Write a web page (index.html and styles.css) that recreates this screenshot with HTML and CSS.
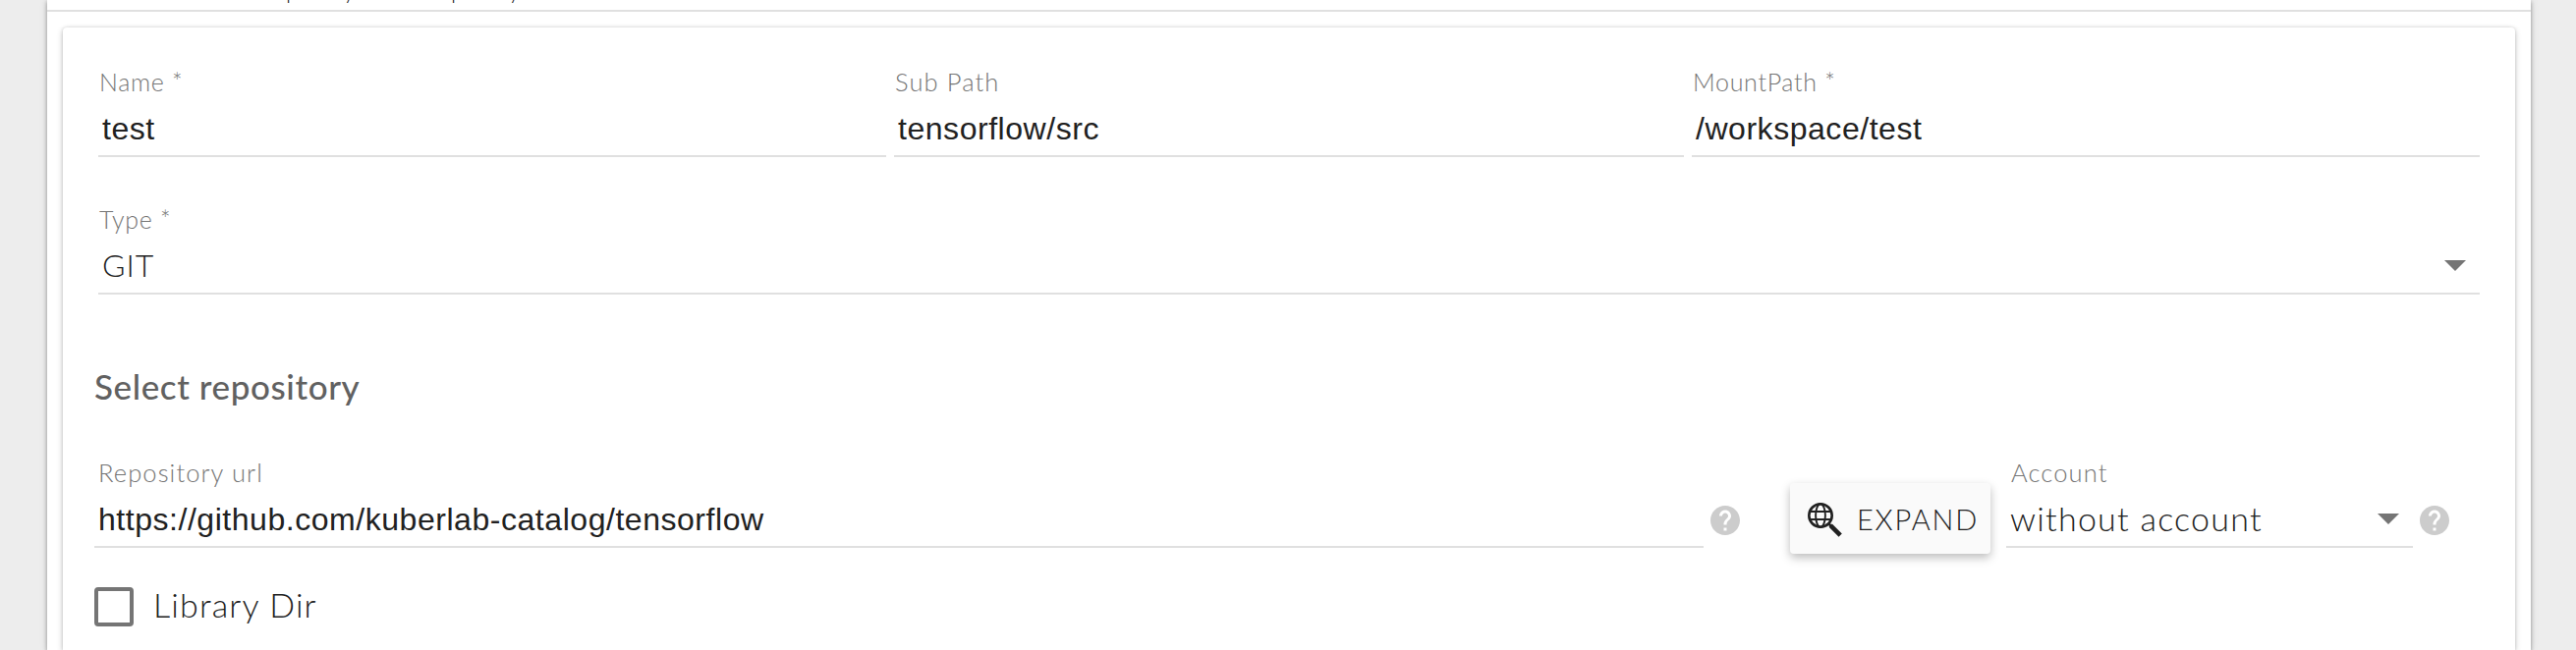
FILE: index.html
```html
<!DOCTYPE html>
<html lang="en">
<head>
<meta charset="utf-8">
<title>Sources</title>
<link rel="stylesheet" href="styles.css">
</head>
<body>
<main class="panel">
  <header class="panel-head"><span>policy</span><span>policy</span></header>
  <section class="card">
    <div class="row row-top">
      <div class="field"><label class="label t-name">Name *</label><div class="value input">test</div></div>
      <div class="field"><label class="label">Sub Path</label><div class="value input">tensorflow/src</div></div>
      <div class="field"><label class="label t-name">MountPath *</label><div class="value input">/workspace/test</div></div>
    </div>
    <div class="row row-type">
      <div class="field"><label class="label t-name">Type *</label><div class="value select"><span class="t-git">GIT</span><i class="arrow"></i></div></div>
    </div>
    <h3 class="title">Select repository</h3>
    <div class="row row-repo">
      <div class="field repo"><label class="label">Repository url</label><div class="value input url">https://github.com/kuberlab-catalog/tensorflow</div></div>
      <svg class="help" viewBox="2 2 20 20"><path fill="#ccc" d="M12 2C6.480 2 2 6.480 2 12s4.480 10 10 10 10-4.480 10-10S17.520 2 12 2zm1 17h-2v-2h2v2zm2.070-7.750l-.9.920C13.450 12.900 13 13.500 13 15h-2v-.5c0-1.100.45-2.100 1.170-2.830l1.240-1.260c.37-.36.59-.86.59-1.410 0-1.100-.9-2-2-2s-2 .9-2 2H8c0-2.210 1.790-4 4-4s4 1.790 4 4c0 .88-.36 1.680-.93 2.250z"/></svg>
      <button class="expand">
        <svg class="globe" viewBox="0 0 36 36" fill="none" stroke="#212121"><circle cx="13" cy="13" r="11.700" stroke-width="2.600"/><ellipse cx="13" cy="13" rx="4.900" ry="11.700" stroke-width="1.900"/><path d="M2 9h22M2 17h22" stroke-width="2"/><path d="M21.500 21.500l3 3" stroke-width="2.500"/><path d="M23.200 23.200l10 10" stroke-width="4.600"/></svg>
        <span>EXPAND</span>
      </button>
      <div class="field account"><label class="label">Account</label><div class="value select"><span class="t-without">without account</span><i class="arrow"></i></div></div>
      <svg class="help" viewBox="2 2 20 20"><path fill="#ccc" d="M12 2C6.480 2 2 6.480 2 12s4.480 10 10 10 10-4.480 10-10S17.520 2 12 2zm1 17h-2v-2h2v2zm2.070-7.750l-.9.920C13.450 12.900 13 13.500 13 15h-2v-.5c0-1.100.45-2.100 1.170-2.830l1.240-1.260c.37-.36.59-.86.59-1.410 0-1.100-.9-2-2-2s-2 .9-2 2H8c0-2.210 1.790-4 4-4s4 1.790 4 4c0 .88-.36 1.680-.93 2.250z"/></svg>
    </div>
    <div class="check"><span class="box"></span><span class="t-lib">Library Dir</span></div>
  </section>
</main>
</body>
</html>
```
FILE: styles.css
```css
* { box-sizing: border-box; }
body { margin: 0; height: 662px; overflow: hidden; background: #ededed; color: #212121; font-family: Lato, sans-serif; font-weight: 300; padding: 0 46px 0 48px; }
.panel { display: flex; flex-direction: column; height: 662px; background: #fff; box-shadow: 0 2px 4px rgba(0,0,0,.35), 0 0 8px rgba(0,0,0,.12); }
.panel-head { display: flex; align-items: flex-end; height: 12px; overflow: hidden; padding: 0 0 6px 243px; border-bottom: 2px solid #e0e0e0; font-size: 24px; line-height: 28px; letter-spacing: 2px; }
.panel-head span { flex: none; width: 168px; }
.card { flex: 1; margin: 16px 16px 0; padding: 38px 36px 0; border-radius: 4px 4px 0 0; background: #fff; box-shadow: 0 2px 6px rgba(0,0,0,.24), 0 0 3px rgba(0,0,0,.12); }
.row { display: flex; }
.row-top { display: grid; grid-template-columns: 802px 804px 802px; gap: 8px; }
.field { display: flex; flex-direction: column; height: 94px; border-bottom: 2px solid #e0e0e0; white-space: nowrap; }
.label { height: 36px; line-height: 35px; padding-left: 1px; font-size: 25.5px; letter-spacing: 1.1px; color: #757575; }
.t-name { font-size: 25px; letter-spacing: .7px; }
.value { height: 56px; line-height: 56px; font-size: 32px; }
.input { padding: 1px 0 0 4px; font-family: "Liberation Sans", Arial, sans-serif; font-weight: 400; letter-spacing: .54px; }
.select { display: flex; align-items: center; justify-content: space-between; padding: 0 14px 0 4px; }
.t-git { letter-spacing: 1px; }
.t-without { font-size: 34px; letter-spacing: 1.25px; }
.arrow { width: 0; height: 0; border: 11px solid transparent; border-top-color: #757575; border-bottom: 0; }
.row-type { margin-top: 46px; }
.row-type .field { flex: 1; }
.title { margin: 68px 0 0 -4px; height: 52px; line-height: 51px; font-size: 35px; font-weight: 500; letter-spacing: .6px; color: #616161; }
.row-repo { height: 94px; margin: 44px 0 0 -4px; }
.repo { width: 1638px; }
.repo .label { padding-left: 4px; }
.help { flex: none; width: 30px; height: 30px; margin: 51px 0 0 7px; }
.expand { display: flex; flex: none; align-items: center; width: 204px; height: 72px; margin: 28px 16px 0 51px; padding: 0 0 0 18px; border: 0; border-radius: 4px; background: #fafafa; box-shadow: 0 4px 10px rgba(0,0,0,.26); color: #212121; font: 300 29px Lato, sans-serif; letter-spacing: 1.8px; }
.globe { flex: none; width: 36px; height: 36px; margin: 3px 14px 0 0; }
.account { width: 414px; }
.account .label { padding-left: 5px; }
.check { display: flex; align-items: center; gap: 20px; height: 40px; margin: 40px 0 0 -4px; font-size: 34px; letter-spacing: 1.15px; }
.box { width: 40px; height: 40px; border: 4px solid #757575; border-radius: 4px; }
.t-lib { padding-bottom: 5px; }
```
